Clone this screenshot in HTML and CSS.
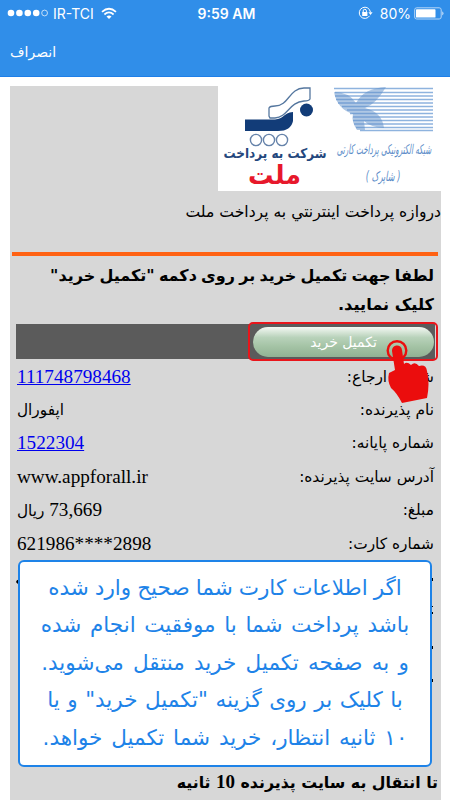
FILE: index.html
```html
<!DOCTYPE html>
<html lang="fa">
<head>
<meta charset="utf-8">
<title>پرداخت</title>
<link rel="stylesheet" href="styles.css">
</head>
<body>
<header class="top">
  <div class="status">
    <div class="carrier">
      <svg width="42" height="10" viewBox="0 0 42 10"><g fill="#fff"><circle cx="4" cy="5" r="3.3"/><circle cx="12.4" cy="5" r="3.3"/><circle cx="20.8" cy="5" r="3.3"/><circle cx="29.2" cy="5" r="3.3"/></g><circle cx="37.6" cy="5" r="2.9" fill="none" stroke="#fff" stroke-width=".7"/></svg>
      <span class="net">IR-TCI</span>
      <svg class="wifi" width="16" height="13" viewBox="0 0 16 13"><g fill="none" stroke="#fff" stroke-width="1.7"><path d="M1 4.9Q8-1.4 15 4.9"/><path d="M3.4 7.5Q8 3.4 12.6 7.5"/></g><path d="M5.5 9.4Q8 7.4 10.5 9.4L8 12Z" fill="#fff"/></svg>
    </div>
    <span class="clock">9:59 AM</span>
    <div class="power">
      <svg width="15" height="14" viewBox="0 0 15 14"><path d="M11.6 9.8A5.6 5.6 0 1 1 12.4 6" fill="none" stroke="#fff"/><path d="M10.4 6.2h4.2l-2.1 2.7z" fill="#fff"/><rect x="4.2" y="6" width="5.2" height="4" fill="#fff"/><path d="M5.2 6V4.9a1.6 1.6 0 0 1 3.2 0V6" fill="none" stroke="#fff"/></svg>
      <span class="pct">80%</span>
      <svg width="30" height="13" viewBox="0 0 30 13"><rect x=".7" y=".8" width="26.5" height="11.2" rx="2" fill="none" stroke="#b5d6f7"/><rect x="2" y="2.2" width="19.5" height="8.4" rx=".7" fill="#fff"/><path d="M28.3 4.2Q30.6 6.4 28.3 8.6Z" fill="#d5e8fb"/></svg>
    </div>
  </div>
  <div class="nav"><span class="cancel">انصراف</span></div>
</header>
<main class="page">
  <div class="logos">
    <svg width="223" height="105" viewBox="218 86 223 105">
      <rect x="218" y="86" width="223" height="105" fill="#fff"/>
      <path d="M269 116V108Q270 106 275 106C289 106 289 88 304 88H310V99Q309 101 304 101C289 102 288 117 275 118H270Z" fill="#fff" stroke="#55779f" stroke-width="1.3"/>
      <path d="M245 119.500H275C284 119 283 113 293 112V121Q291 131 278 131H245Z" fill="#123c78"/>
      <circle cx="306.500" cy="110" r="6.500" fill="#123c78"/>
      <g fill="#fff" stroke="#6683aa" stroke-width="1.400"><circle cx="256" cy="140" r="5.600"/><circle cx="282" cy="140" r="5.600"/><circle cx="269" cy="140" r="5.600"/></g>
      <text class="brand" x="275" y="158" textLength="103" lengthAdjust="spacingAndGlyphs">شرکت به پرداخت</text>
      <text class="mellat" x="274.500" y="184" textLength="53" lengthAdjust="spacingAndGlyphs">ملت</text>
      <path d="M334 88.500H433M335 92.500H433M335 96H433M336 99.500H433M338 103H433M342 106.500H433M347 110H433M350 113.500H433M353 117H433M353 120.500H433M354 124H433M356 127.500H433M360 130.500H433" stroke="#8eb3de" stroke-width="1.300"/>
      <path d="M334 92Q349 92 356 103Q364 88 386 87Q376 104 365 108Q382 112 384 128Q370 127 364 121L365 130H357Q351 121 353 114Q337 109 334 92Z" fill="#608fc9" opacity=".5"/>
      <text class="script" transform="translate(384 154) scale(1 1.7)">شبکه الکترونیکی پرداخت کارتی</text>
      <text class="script small" transform="translate(383 181) scale(1 1.5)">( شاپرک )</text>
    </svg>
  </div>
  <p class="gateway" dir="rtl">دروازه پرداخت اينترنتي به پرداخت ملت</p>
  <hr class="rule">
  <h1 class="notice" dir="rtl"><span class="n1">لطفا جهت تکمیل خرید بر روی دکمه "تکمیل خرید"</span><br><span class="n2">کلیک نمایید.</span></h1>
  <div class="bar"><div class="ring"><button class="finish">تکمیل خرید</button></div>
    <svg class="hand" width="46" height="66" viewBox="385 339 46 66"><circle cx="397" cy="350.500" r="9.300" fill="none" stroke="#eb0d0d" stroke-width="2.400"/><path d="M392 351a5 5 0 0 1 10-1L404 364Q407 361 411 365Q415 361 419 366Q426 364 427 371Q430 383 427 398L402 403Q397 393 391 388Q387 381 389 373L395 370Z" fill="#eb0d0d"/></svg>
  </div>
  <dl class="details" dir="rtl">
    <div class="row"><dt>شماره ارجاع:</dt><dd dir="ltr"><a>111748798468</a></dd></div>
    <div class="row"><dt>نام پذیرنده:</dt><dd class="fa">اپفورال</dd></div>
    <div class="row"><dt>شماره پایانه:</dt><dd dir="ltr"><a>1522304</a></dd></div>
    <div class="row"><dt>آدرس سایت پذیرنده:</dt><dd dir="ltr">www.appforall.ir</dd></div>
    <div class="row"><dt>مبلغ:</dt><dd dir="rtl">73,669 <span class="fa">ریال</span></dd></div>
    <div class="row"><dt>شماره کارت:</dt><dd dir="ltr">621986****2898</dd></div>
  </dl>
  <p class="count" dir="rtl">تا انتقال به سایت پذیرنده <b>10</b> ثانیه</p>
  <svg class="edges" width="424" height="110" viewBox="0 0 424 110"><path d="M0 8q1-3 3-2v4q-2 0-3-2zM415 4h2v3h-2zM415 32h2v1h-2zM415 38h2v2h-2zM415 72h2v3h-2zM415 105h2v3h-2z"/></svg>
  <section class="tip" dir="rtl"><span class="t1">اگر اطلاعات کارت شما صحیح وارد شده</span><span class="t2">باشد پرداخت شما با موفقیت انجام شده</span><span class="t3">و به صفحه تکمیل خرید منتقل می‌شوید.</span><span class="t4">با کلیک بر روی گزینه "تکمیل خرید" و یا</span><span class="t5">۱۰ ثانیه انتظار، خرید شما تکمیل خواهد.</span></section>
</main>
</body>
</html>
```
FILE: styles.css
```css
* { box-sizing: border-box; }
body { margin: 0; width: 450px; height: 800px; overflow: hidden; background: #fff; font-family: "DejaVu Sans", sans-serif; color: #000; }
.top { height: 77px; background: #308ee9; border-bottom: 1px solid #1e7fe8; color: #fff; }
.status { height: 26px; display: grid; grid-template-columns: 1fr auto 1fr; align-items: center; padding: 0 6px 0 7px; font-family: Inter, sans-serif; font-size: 13.5px; }
.carrier, .power { display: flex; align-items: center; }
.carrier { gap: 4px; }
.net { font-size: 14px; }
.wifi { margin-left: 3px; }
.power { justify-content: flex-end; }
.pct { margin: 0 3px 0 7px; font-size: 14px; }
.clock { font-weight: 600; font-size: 14px; padding-left: 2px; }
.nav { padding: 15px 10px 0; font-size: 14px; line-height: 22px; }
.page { position: relative; width: 431px; height: 714px; margin: 9px 0 0 10px; background: #d7d7d7; }
.logos { height: 105px; display: flex; justify-content: flex-end; }
.logos svg { overflow: visible; }
.brand, .mellat, .script { text-anchor: middle; direction: rtl; }
.brand { font-size: 13.5px; font-weight: bold; fill: #24477d; }
.mellat { font-size: 26px; font-weight: bold; fill: #e7182b; }
.script { font-family: "DejaVu Sans Condensed", "DejaVu Sans", sans-serif; font-size: 8px; font-style: italic; fill: #5b8cc8; }
.small { font-size: 9px; }
.gateway { margin: 8px 0 0; height: 53px; font-size: 15.6px; line-height: 26px; white-space: nowrap; }
.rule { border: 0; height: 4px; margin: 0 3px 0 2px; background: #ff6213; }
.notice { margin: 5px 7px 0 0; height: 62px; font-size: 16px; line-height: 29px; white-space: nowrap; }
.n1 { word-spacing: -1.3px; }
.n2 { font-size: 16.2px; }
.bar { position: relative; height: 35px; margin: 1px 6px 0 6px; background: #5b5b5b; display: flex; justify-content: flex-end; }
.ring { width: 190px; height: 39px; flex: none; margin: -2px -3px 0 0; border: 2px solid #e9151b; border-radius: 5px; padding: 3px; }
.finish { display: block; width: 181px; height: 30px; border: 0; border-radius: 16px; background: linear-gradient(#f4f8f4, #b8d2ba 35%, #a4c3a5 65%, #91b293); color: #fff; font: 14px "DejaVu Sans", sans-serif; }
.hand { position: absolute; left: 369px; top: 15px; z-index: 2; }
.details { margin: 1px 7px 0 7px; }
.row { height: 33.4px; display: flex; justify-content: space-between; align-items: center; white-space: nowrap; }
dt { font-size: 15.4px; }
dd { margin: 0; font-family: "Liberation Serif", "DejaVu Sans", serif; font-size: 19.2px; }
.fa { font-family: "DejaVu Sans", sans-serif; font-size: 15.3px; }
a { color: #0000ee; text-decoration: underline; }
.count { position: absolute; right: 3px; bottom: 3px; margin: 0; font-size: 15.8px; font-weight: bold; white-space: nowrap; line-height: 28px; }
.count b { font-family: "Liberation Serif", serif; font-size: 19px; }
.edges { position: absolute; left: 6px; top: 488px; }
.tip { position: absolute; left: 8px; top: 474px; width: 414px; height: 207px; border: 2px solid #1e83e8; border-radius: 6px; background: #fff; color: #1e83e8; font-size: 21.5px; line-height: 37.4px; padding-top: 7px; display: flex; flex-direction: column; align-items: center; white-space: nowrap; }
.t1 { word-spacing: -0.8px; }
.t2 { word-spacing: 1.8px; }
.t3 { word-spacing: 2.4px; }
.t4 { word-spacing: 0.7px; }
.t5 { word-spacing: 2px; }
```
